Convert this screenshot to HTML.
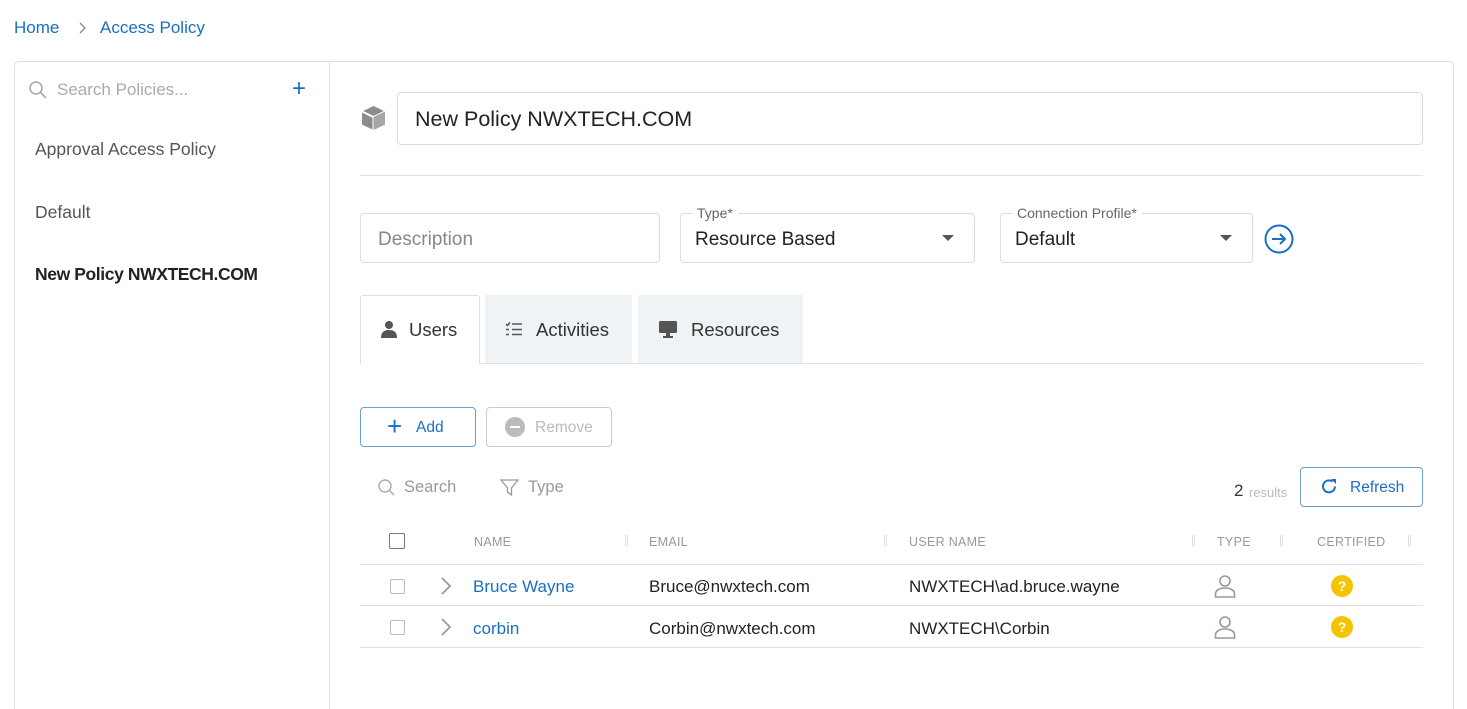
<!DOCTYPE html>
<html style="height:709px;overflow:hidden"><head><meta charset="utf-8"><style>
*{box-sizing:border-box;margin:0;padding:0}
html,body{width:1467px;height:709px;overflow:hidden}
body{background:#fff;font-family:"Liberation Sans",sans-serif;color:#222;position:relative}
.a{position:absolute;white-space:nowrap}
.blue{color:#1a6fc4}
.box{position:absolute;border:1px solid #dcdcdc;border-radius:4px;background:#fff}
.hdr{position:absolute;top:535px;font-size:12.5px;color:#999;letter-spacing:.3px}
.sep{position:absolute;top:535px;width:3px;height:11px;border-left:1px solid #ddd;border-right:1px solid #ddd}
.line{position:absolute;left:360px;width:1063px;height:1px;background:#e0e0e0}
.cb{position:absolute;width:15px;height:15px;border:1.5px solid #bbb;border-radius:2px}
.q{position:absolute;width:22px;height:22px;border-radius:50%;background:#f5c400;color:#fff;font-weight:bold;font-size:14px;text-align:center;line-height:22px}
</style></head><body>
<div class="a blue" style="left:14px;top:18px;font-size:17px">Home</div>
<svg class="a" style="left:78px;top:21px" width="10" height="14" viewBox="0 0 10 14"><path d="M2 2L7 7L2 12" fill="none" stroke="#888" stroke-width="1.3"/></svg>
<div class="a blue" style="left:100px;top:18px;font-size:17px">Access Policy</div>

<div style="position:absolute;left:14px;top:61px;width:1440px;height:661px;border:1px solid #e0e0e0;border-radius:5px"></div>
<div style="position:absolute;left:329px;top:62px;width:1px;height:647px;background:#e0e0e0"></div>

<svg class="a" style="left:28px;top:80px" width="20" height="20" viewBox="0 0 20 20"><circle cx="8" cy="8" r="6" fill="none" stroke="#aaa" stroke-width="1.6"/><path d="M12.5 12.5L18 18" stroke="#aaa" stroke-width="1.6"/></svg>
<div class="a" style="left:57px;top:80px;font-size:17px;color:#aaa">Search Policies...</div>
<div class="a blue" style="left:292px;top:75px;font-size:24px">+</div>
<div class="a" style="left:35px;top:139px;font-size:17.5px;color:#555">Approval Access Policy</div>
<div class="a" style="left:35px;top:202px;font-size:17.5px;color:#555">Default</div>
<div class="a" style="left:35px;top:264px;font-size:17.5px;color:#222;font-weight:bold;letter-spacing:-.4px">New Policy NWXTECH.COM</div>

<svg class="a" style="left:360px;top:104px" width="27" height="28" viewBox="0 0 27 28"><path d="M13.5 2L25 7.5V20.5L13.5 26L2 20.5V7.5Z" fill="#8c8c8c"/><path d="M2 7.5L13.5 13L25 7.5M13.5 13V26" stroke="#fff" stroke-width="2" fill="none"/><path d="M13.5 13L25 7.5V20.5L13.5 26Z" fill="#a6a6a6"/></svg>
<div class="box" style="left:397px;top:92px;width:1026px;height:53px"></div>
<div class="a" style="left:415px;top:107px;font-size:21.5px;color:#222">New Policy NWXTECH.COM</div>
<div class="line" style="top:175px"></div>

<div class="box" style="left:360px;top:213px;width:300px;height:50px"></div>
<div class="a" style="left:378px;top:229px;font-size:19px;color:#888">Description</div>
<div class="box" style="left:680px;top:213px;width:295px;height:50px"></div>
<div class="a" style="left:692px;top:205px;font-size:14px;color:#666;background:#fff;padding:0 5px">Type*</div>
<div class="a" style="left:695px;top:229px;font-size:19px;color:#222">Resource Based</div>
<div class="a" style="left:942px;top:235px;width:0;height:0;border-left:6px solid transparent;border-right:6px solid transparent;border-top:6px solid #555"></div>
<div class="box" style="left:1000px;top:213px;width:253px;height:50px"></div>
<div class="a" style="left:1012px;top:205px;font-size:14px;color:#666;background:#fff;padding:0 5px">Connection Profile*</div>
<div class="a" style="left:1015px;top:229px;font-size:19px;color:#222">Default</div>
<div class="a" style="left:1220px;top:235px;width:0;height:0;border-left:6px solid transparent;border-right:6px solid transparent;border-top:6px solid #555"></div>
<svg class="a" style="left:1264px;top:224px" width="30" height="30" viewBox="0 0 30 30"><circle cx="15" cy="15" r="13.5" fill="none" stroke="#1a6fc4" stroke-width="2"/><path d="M8 15H21M16 10L21 15L16 20" stroke="#1a6fc4" stroke-width="2" fill="none"/></svg>

<div style="position:absolute;left:479px;top:363px;width:944px;height:1px;background:#e0e0e0"></div>
<div style="position:absolute;left:360px;top:295px;width:120px;height:70px;border:1px solid #e0e0e0;border-bottom:none;background:#fff;border-radius:3px 3px 0 0"></div>
<div style="position:absolute;left:485px;top:295px;width:147px;height:68px;background:#f0f3f5"></div>
<div style="position:absolute;left:638px;top:295px;width:165px;height:68px;background:#f0f3f5"></div>
<svg class="a" style="left:380px;top:320px" width="18" height="18" viewBox="0 0 18 18"><circle cx="9" cy="5" r="4" fill="#555"/><path d="M1 18C1 12 4 10 9 10S17 12 17 18Z" fill="#555"/></svg>
<div class="a" style="left:409px;top:319px;font-size:18.5px;color:#333">Users</div>
<svg class="a" style="left:505px;top:321px" width="18" height="16" viewBox="0 0 18 16"><path d="M1 3l1.5 1.5L5 1.5M1 8.5h3M1 13.5h3M7 3h10M7 8.5h10M7 13.5h10" stroke="#555" stroke-width="1.5" fill="none"/></svg>
<div class="a" style="left:536px;top:319px;font-size:18.5px;color:#333">Activities</div>
<svg class="a" style="left:658px;top:320px" width="20" height="19" viewBox="0 0 20 19"><rect x="1" y="1" width="18" height="12" rx="1.5" fill="#555"/><rect x="8" y="13" width="4" height="3" fill="#555"/><rect x="5" y="16" width="10" height="2" fill="#555"/></svg>
<div class="a" style="left:691px;top:319px;font-size:18.5px;color:#333">Resources</div>

<div class="box" style="left:360px;top:407px;width:116px;height:40px;border-color:#6d9fd0"></div>
<div class="a blue" style="left:387px;top:411px;font-size:26px;line-height:30px">+</div>
<div class="a blue" style="left:416px;top:419px;font-size:15.5px">Add</div>
<div class="box" style="left:486px;top:407px;width:126px;height:40px;border-color:#ccc"></div>
<div class="a" style="left:505px;top:417px;width:20px;height:20px;border-radius:50%;background:#bbb"></div>
<div class="a" style="left:510px;top:426px;width:10px;height:2px;background:#fff"></div>
<div class="a" style="left:535px;top:419px;font-size:15.5px;color:#bbb">Remove</div>

<svg class="a" style="left:377px;top:478px" width="20" height="20" viewBox="0 0 20 20"><circle cx="8" cy="8" r="6" fill="none" stroke="#aaa" stroke-width="1.4"/><path d="M12.5 12.5L17 17" stroke="#aaa" stroke-width="1.4"/></svg>
<div class="a" style="left:404px;top:478px;font-size:16.5px;color:#999">Search</div>
<svg class="a" style="left:500px;top:479px" width="19" height="17" viewBox="0 0 19 17"><path d="M1 1H18L11.5 9V16L7.5 13V9Z" fill="none" stroke="#999" stroke-width="1.3"/></svg>
<div class="a" style="left:528px;top:478px;font-size:16.5px;color:#999">Type</div>

<div class="a" style="left:1234px;top:481px;font-size:17px;color:#333">2</div>
<div class="a" style="left:1249px;top:485px;font-size:13px;color:#bbb">results</div>
<div class="box" style="left:1300px;top:467px;width:123px;height:40px;border-color:#6d9fd0"></div>
<svg class="a" style="left:1320px;top:477px" width="19" height="19" viewBox="0 0 19 19"><path d="M15 9.5A6 6 0 1 1 12.5 4.5" fill="none" stroke="#1a6fc4" stroke-width="2"/><path d="M11 2H16V7Z" fill="#1a6fc4"/></svg>
<div class="a blue" style="left:1350px;top:479px;font-size:15.5px">Refresh</div>

<div class="cb" style="left:389px;top:533px;width:16px;height:16px;border-color:#777"></div>
<div class="hdr" style="left:474px">NAME</div>
<div class="sep" style="left:625px"></div>
<div class="hdr" style="left:649px">EMAIL</div>
<div class="sep" style="left:884px"></div>
<div class="hdr" style="left:909px">USER NAME</div>
<div class="sep" style="left:1192px"></div>
<div class="hdr" style="left:1217px">TYPE</div>
<div class="sep" style="left:1280px"></div>
<div class="hdr" style="left:1317px">CERTIFIED</div>
<div class="sep" style="left:1408px"></div>
<div class="line" style="top:564px"></div>

<div class="cb" style="left:390px;top:579px"></div>
<svg class="a" style="left:440px;top:576px" width="12" height="20" viewBox="0 0 12 20"><path d="M2 2L10 10L2 18" fill="none" stroke="#999" stroke-width="1.8"/></svg>
<div class="a blue" style="left:473px;top:577px;font-size:17px">Bruce Wayne</div>
<div class="a" style="left:649px;top:577px;font-size:17px">Bruce@nwxtech.com</div>
<div class="a" style="left:909px;top:577px;font-size:17px">NWXTECH\ad.bruce.wayne</div>
<svg class="a" style="left:1214px;top:574px" width="22" height="24" viewBox="0 0 22 24"><circle cx="11" cy="7" r="5" fill="none" stroke="#999" stroke-width="1.6"/><path d="M1.5 23V20C1.5 16 6 14 11 14S20.5 16 20.5 20V23Z" fill="none" stroke="#999" stroke-width="1.6"/></svg>
<div class="q" style="left:1331px;top:575px">?</div>
<div class="line" style="top:605px"></div>

<div class="cb" style="left:390px;top:620px"></div>
<svg class="a" style="left:440px;top:617px" width="12" height="20" viewBox="0 0 12 20"><path d="M2 2L10 10L2 18" fill="none" stroke="#999" stroke-width="1.8"/></svg>
<div class="a blue" style="left:473px;top:619px;font-size:17px">corbin</div>
<div class="a" style="left:649px;top:619px;font-size:17px">Corbin@nwxtech.com</div>
<div class="a" style="left:909px;top:619px;font-size:17px">NWXTECH\Corbin</div>
<svg class="a" style="left:1214px;top:615px" width="22" height="24" viewBox="0 0 22 24"><circle cx="11" cy="7" r="5" fill="none" stroke="#999" stroke-width="1.6"/><path d="M1.5 23V20C1.5 16 6 14 11 14S20.5 16 20.5 20V23Z" fill="none" stroke="#999" stroke-width="1.6"/></svg>
<div class="q" style="left:1331px;top:616px">?</div>
<div class="line" style="top:647px"></div>
</body></html>
